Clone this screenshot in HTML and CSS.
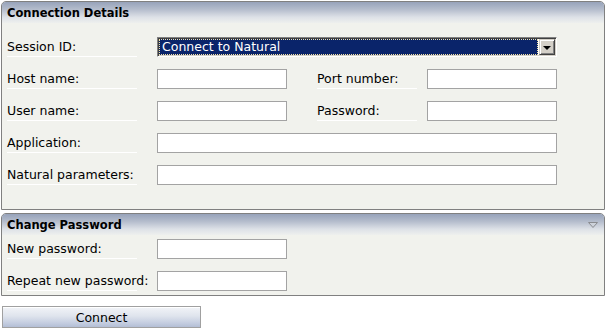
FILE: index.html
```html
<!DOCTYPE html>
<html>
<head>
<meta charset="utf-8">
<title>Connection</title>
<link rel="stylesheet" href="styles.css">
</head>
<body>
<section class="panel">
  <div class="panel-head"><span>Connection Details</span></div>
  <div class="panel-body panel-body-main">
    <div class="row">
      <label class="lbl">Session ID:</label>
      <div class="select">
        <div class="sel-value">Connect to Natural</div>
        <div class="sel-btn"><span class="sel-arrow"></span></div>
      </div>
    </div>
    <div class="row">
      <label class="lbl">Host name:</label>
      <input class="field" type="text">
      <label class="lbl lbl-right">Port number:</label>
      <input class="field" type="text">
    </div>
    <div class="row">
      <label class="lbl">User name:</label>
      <input class="field" type="text">
      <label class="lbl lbl-right">Password:</label>
      <input class="field" type="password">
    </div>
    <div class="row">
      <label class="lbl">Application:</label>
      <input class="field field-wide" type="text">
    </div>
    <div class="row">
      <label class="lbl">Natural parameters:</label>
      <input class="field field-wide" type="text">
    </div>
  </div>
</section>
<section class="panel panel-second">
  <div class="panel-head">
    <span>Change Password</span>
    <svg class="collapse-icon" width="10" height="6" viewBox="0 0 10 6"><polygon points="0.5,0.5 9.5,0.5 5,5.5" fill="#cdd2da" stroke="#8a8c90" stroke-width="1"/></svg>
  </div>
  <div class="panel-body panel-body-small">
    <div class="row">
      <label class="lbl">New password:</label>
      <input class="field" type="password">
    </div>
    <div class="row">
      <label class="lbl">Repeat new password:</label>
      <input class="field" type="password">
    </div>
  </div>
</section>
<button class="btn" type="button">Connect</button>
</body>
</html>
```

FILE: styles.css
```css
html, body {
  background: #ffffff;
}
body {
  margin: 1px;
  font-family: "DejaVu Sans", Verdana, sans-serif;
  font-size: 12.5px;
  color: #000;
}
.panel {
  width: 604px;
  box-sizing: border-box;
  border: 1px solid #808080;
  border-radius: 5px 5px 0 0;
  background: #f1f2ed;
}
.panel-second {
  margin-top: 3px;
}
.panel-head {
  height: 21px;
  display: flex;
  align-items: center;
  justify-content: space-between;
  padding: 0 6px 0 5px;
  border-radius: 4px 4px 0 0;
  background: linear-gradient(to bottom, #97a3ba 0%, #b4bccc 35%, #dde1e7 72%, #eef0ee 100%);
  font-weight: bold;
  font-size: 11.5px;
}
.panel-body {
  display: flex;
  flex-direction: column;
  gap: 12px;
  padding-left: 5px;
}
.panel-body-main {
  padding-top: 14px;
  padding-bottom: 24px;
}
.panel-body-small {
  padding-top: 4px;
  padding-bottom: 4px;
}
.row {
  display: flex;
  height: 20px;
}
.lbl {
  width: 130px;
  height: 20px;
  box-sizing: border-box;
  border-bottom: 1px solid #ffffff;
  display: flex;
  align-items: center;
  white-space: nowrap;
  margin-right: 20px;
}
.lbl-right {
  width: 100px;
  margin-left: 30px;
  margin-right: 10px;
}
.field {
  width: 130px;
  height: 20px;
  box-sizing: border-box;
  margin: 0;
  padding: 0 2px;
  border: 1px solid #a3a3a3;
  background: #fff;
  font: inherit;
}
.field-wide {
  width: 400px;
}
.select {
  width: 400px;
  height: 20px;
  box-sizing: border-box;
  border: 1px solid;
  border-color: #808080 #ffffff #ffffff #808080;
  box-shadow: inset 1px 1px 0 #404040, inset -1px -1px 0 #d4d0c8;
  background: #fff;
  padding: 1px 1px 1px 1px;
  display: flex;
  gap: 1px;
}
.sel-value {
  flex: 1;
  background: #0a246a;
  color: #fff;
  border: 1px dotted #f3e3a6;
  display: flex;
  align-items: center;
  padding-left: 2px;
  line-height: 1;
}
.sel-btn {
  width: 16px;
  box-sizing: border-box;
  background: #d4d0c8;
  border: 1px solid;
  border-color: #d4d0c8 #404040 #404040 #d4d0c8;
  box-shadow: inset 1px 1px 0 #ffffff, inset -1px -1px 0 #808080;
  display: flex;
  align-items: center;
  justify-content: center;
}
.sel-arrow {
  width: 0;
  height: 0;
  border-left: 4px solid transparent;
  border-right: 4px solid transparent;
  border-top: 4px solid #000;
  margin-top: 1px;
}
.collapse-icon {
  display: block;
}
.btn {
  display: block;
  margin: 10px 0 0 1px;
  width: 199px;
  height: 22px;
  box-sizing: border-box;
  border: 1px solid #a0a0a0;
  box-shadow: inset 0 1px 0 #ffffff;
  background: linear-gradient(to bottom, #f2f4f8 0%, #dfe4ed 45%, #c4cde0 80%, #b3bed5 100%);
  font-family: "DejaVu Sans", Verdana, sans-serif;
  font-size: 12.5px;
  color: #000;
  padding: 0;
}
```
